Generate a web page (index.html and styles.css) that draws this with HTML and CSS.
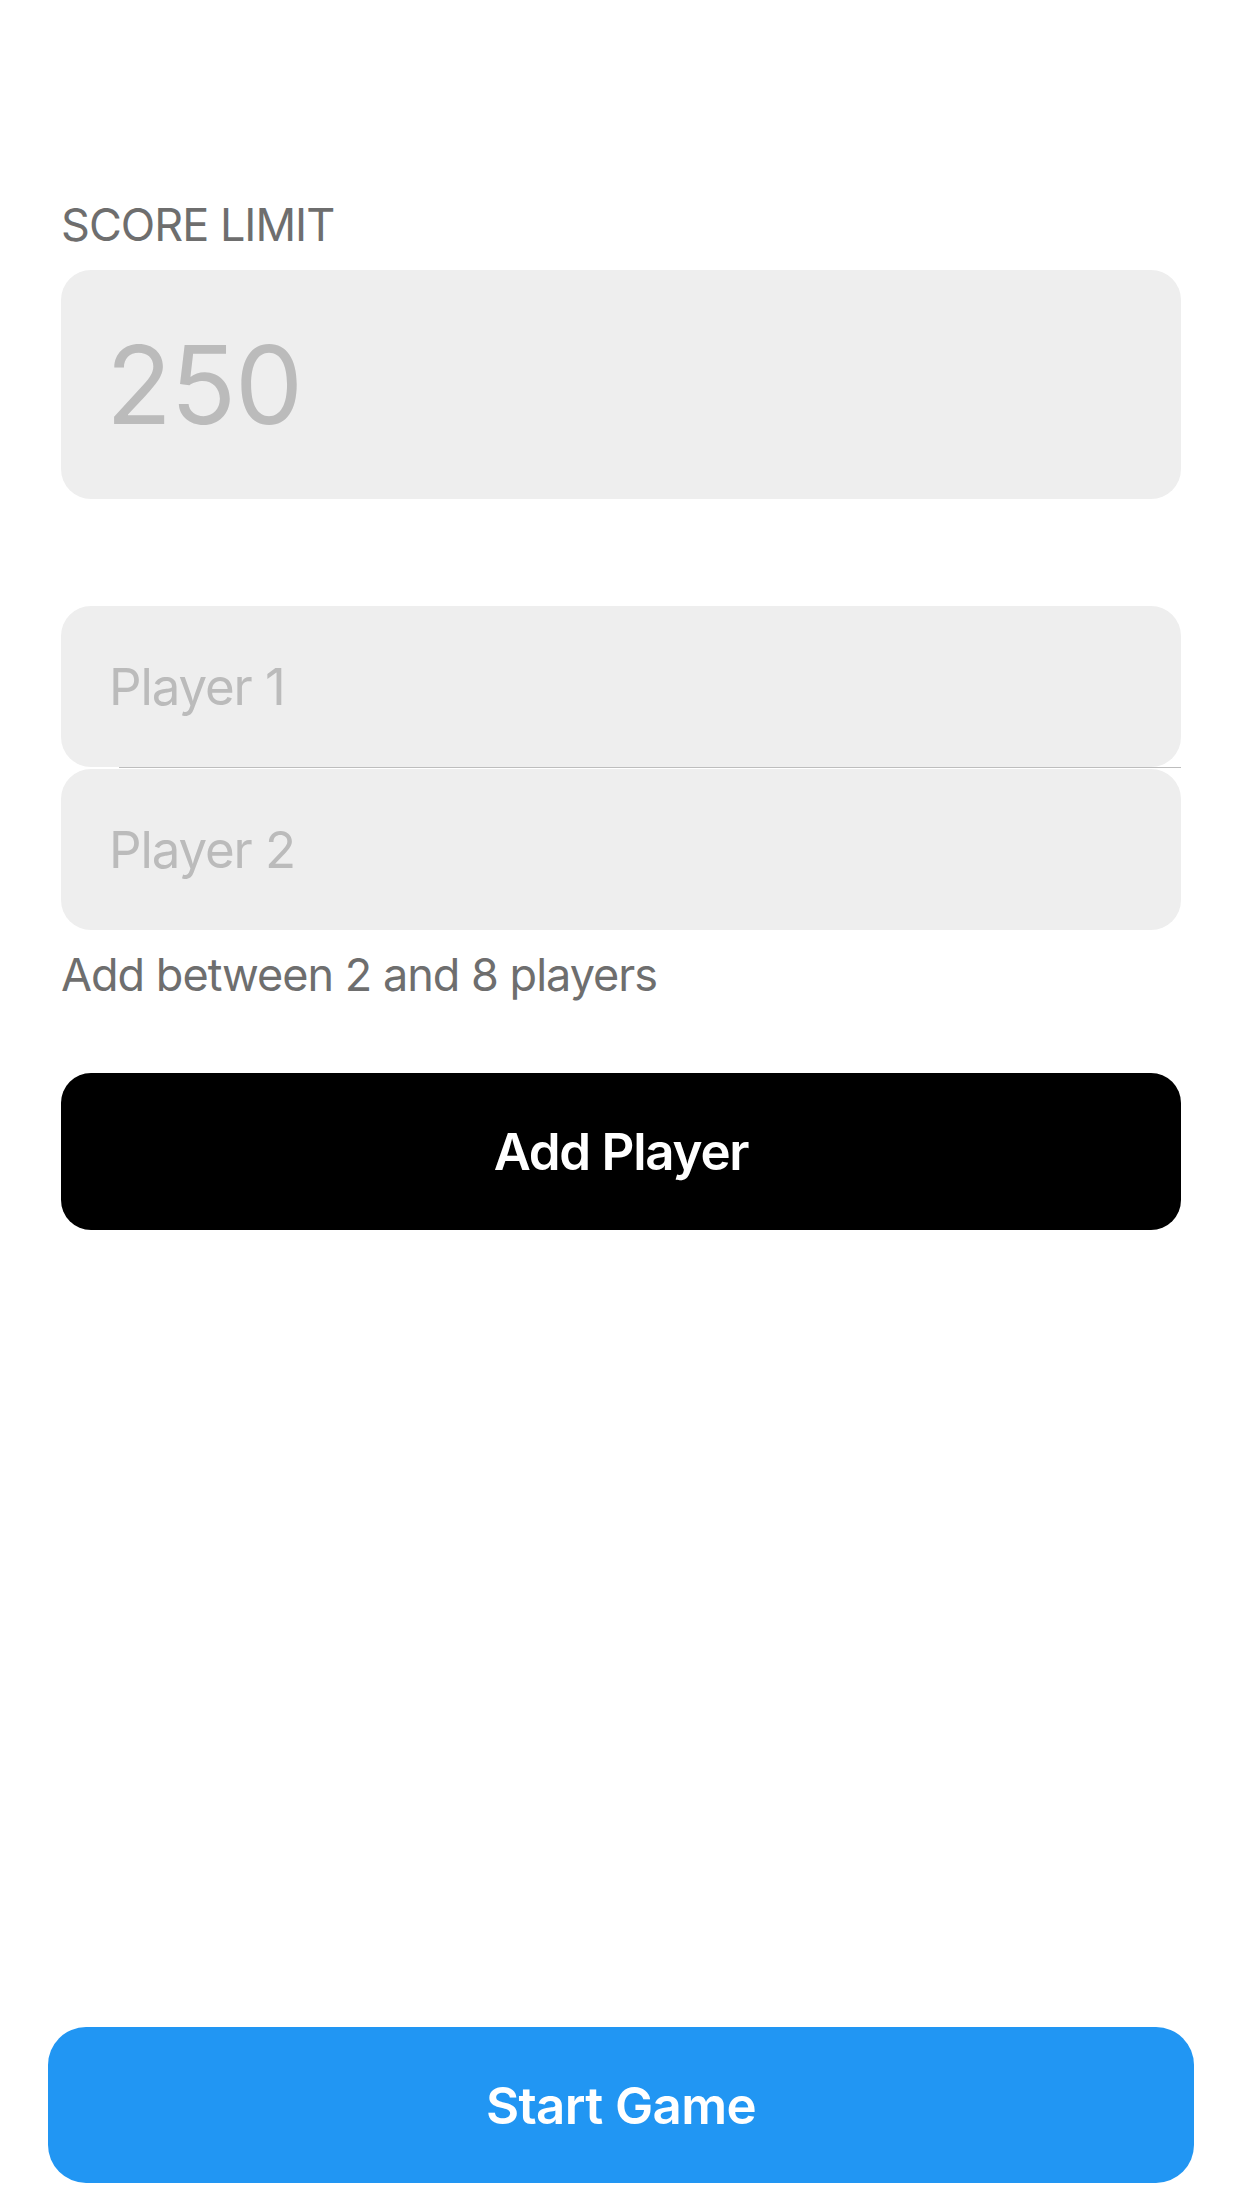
FILE: index.html
```html
<!DOCTYPE html>
<html lang="en">
<head>
<meta charset="utf-8">
<title>New Game</title>
<link rel="stylesheet" href="styles.css">
</head>
<body>
<div class="screen">
  <main class="content">
    <div class="label">SCORE LIMIT</div>
    <div class="score-box"><span class="score-value">250</span></div>

    <div class="players">
      <div class="player-row"><span class="placeholder">Player 1</span></div>
      <div class="separator"></div>
      <div class="player-row"><span class="placeholder">Player 2</span></div>
    </div>
    <div class="hint">Add between 2 and 8 players</div>

    <div class="btn btn-dark">Add Player</div>
  </main>
  <footer class="footer">
    <div class="btn btn-blue">Start Game</div>
  </footer>
</div>
</body>
</html>
```

FILE: styles.css
```css
* { box-sizing: border-box; }

html, body {
  margin: 0;
  padding: 0;
  background: #ffffff;
}

body {
  font-family: Inter, "Noto Sans", "Liberation Sans", sans-serif;
  -webkit-font-smoothing: antialiased;
}

.screen {
  width: 1242px;
  min-height: 2208px;
  display: flex;
  flex-direction: column;
}

.content {
  flex: 1;
  padding: 198px 61px 0 61px;
  display: flex;
  flex-direction: column;
}

.label {
  font-size: 45px;
  line-height: 54px;
  color: #6e6e6e;
  letter-spacing: -0.022em;
  margin-bottom: 18px;
}

.score-box {
  height: 229px;
  background: #eeeeee;
  border-radius: 30px;
  display: flex;
  align-items: center;
  padding-left: 45px;
}

.score-value {
  font-size: 108px;
  line-height: 1;
  color: #bbbbbb;
  letter-spacing: -0.012em;
}

.players {
  margin-top: 107px;
  display: flex;
  flex-direction: column;
}

.player-row {
  height: 161px;
  background: #eeeeee;
  border-radius: 30px;
  display: flex;
  align-items: center;
  padding-left: 48px;
}

.separator {
  height: 1px;
  margin: 0 0 1px 58px;
  background: #bdbdbd;
}

.placeholder {
  font-size: 51px;
  line-height: 1;
  color: #bbbbbb;
  letter-spacing: -0.022em;
}

.hint {
  margin-top: 18px;
  font-size: 45px;
  line-height: 54px;
  color: #6e6e6e;
  letter-spacing: -0.022em;
}

.btn {
  display: flex;
  align-items: center;
  justify-content: center;
  color: #ffffff;
  font-size: 51px;
  font-weight: 600;
}

.btn-dark {
  margin-top: 71px;
  height: 157px;
  background: #000000;
  border-radius: 30px;
  letter-spacing: -0.024em;
}

.footer {
  padding: 0 48px 25px 48px;
}

.btn-blue {
  height: 156px;
  background: #2196f3;
  border-radius: 38px;
  letter-spacing: -0.012em;
}
```
